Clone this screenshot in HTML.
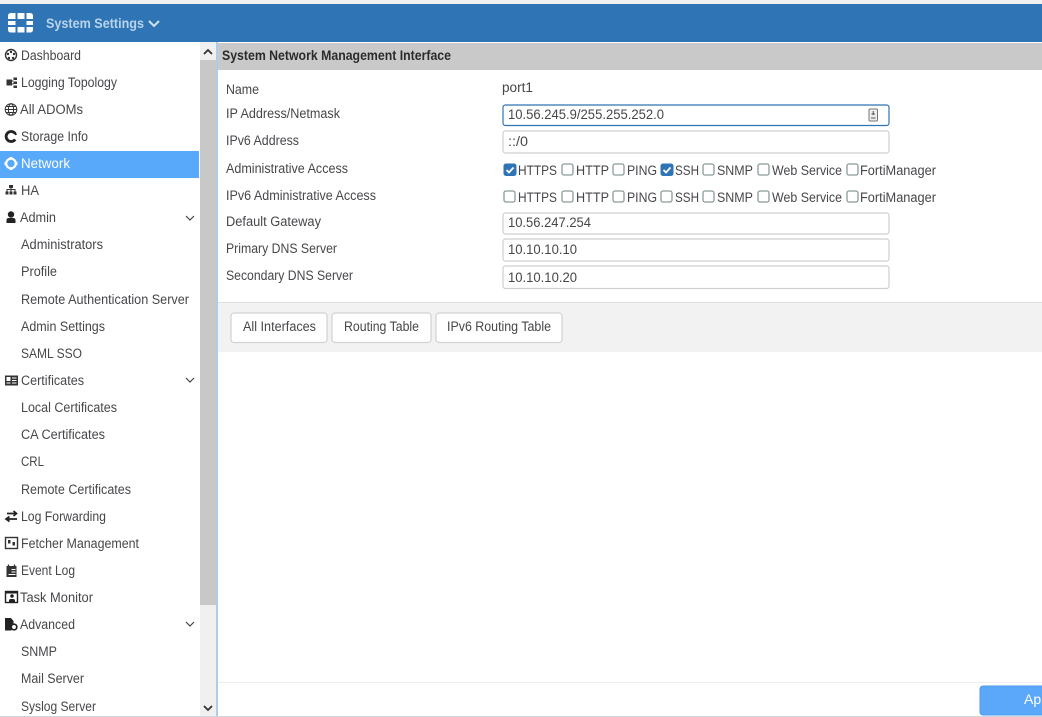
<!DOCTYPE html>
<html><head><meta charset="utf-8"><style>
html,body{margin:0;padding:0;background:#fff;width:1042px;height:717px;overflow:hidden}
svg{display:block;filter:blur(0.35px)}
text{font-family:"Liberation Sans",sans-serif;font-size:13.5px;fill:#47474b}
</style></head><body>
<svg width="1042" height="717" viewBox="0 0 1042 717" xmlns="http://www.w3.org/2000/svg">
<rect width="1042" height="717" fill="#fff"/>
<rect width="1042" height="4" fill="#f0f0f0"/>
<rect y="4" width="1042" height="38" fill="#2f75b5"/>
<!-- logo -->
<g fill="#fff">
<path d="M8 16 Q8 13 11 13 H15.500 V19 H8Z"/><rect x="17.500" y="13" width="7" height="6"/><path d="M26.500 13 H30 Q33 13 33 16 V19 H26.500Z"/>
<rect x="8" y="21" width="7.500" height="4"/><rect x="26.500" y="21" width="6.500" height="4"/>
<path d="M8 27 H15.500 V32.500 H11 Q8 32.500 8 29.500Z"/><rect x="17.500" y="27" width="7" height="5.500"/><path d="M26.500 27 H33 V29.500 Q33 32.500 30 32.500 H26.500Z"/>
</g>
<text x="46" y="28" textLength="98" lengthAdjust="spacingAndGlyphs" style="font-weight:bold;fill:#b9d4ea">System Settings</text>
<path d="M149 21 L154 26 L159 21" fill="none" stroke="#cfe2f1" stroke-width="2"/>

<!-- sidebar -->
<rect x="0" y="151" width="199" height="27" fill="#59a9fb"/>
<rect x="200" y="42" width="16" height="674" fill="#f0f0f0"/>
<rect x="200" y="60" width="16" height="545" fill="#c8c8c8"/>
<path d="M204 54 L208 50 L212 54" fill="none" stroke="#333" stroke-width="1.800"/>
<path d="M204 706 L208 710 L212 706" fill="none" stroke="#333" stroke-width="1.800"/>
<rect x="216.500" y="42" width="1" height="674" fill="#5b9bd0"/>

<text x="21" y="60" textLength="60" lengthAdjust="spacingAndGlyphs">Dashboard</text>
<text x="21" y="87" textLength="96" lengthAdjust="spacingAndGlyphs">Logging Topology</text>
<text x="20" y="114" textLength="63" lengthAdjust="spacingAndGlyphs">All ADOMs</text>
<text x="21" y="141" textLength="67" lengthAdjust="spacingAndGlyphs">Storage Info</text>
<text x="21" y="168" textLength="49" lengthAdjust="spacingAndGlyphs" style="fill:#fff">Network</text>
<text x="21" y="195" textLength="18" lengthAdjust="spacingAndGlyphs">HA</text>
<text x="20" y="222" textLength="36" lengthAdjust="spacingAndGlyphs">Admin</text>
<text x="21" y="249" textLength="82" lengthAdjust="spacingAndGlyphs">Administrators</text>
<text x="21" y="276" textLength="36" lengthAdjust="spacingAndGlyphs">Profile</text>
<text x="21" y="304" textLength="168" lengthAdjust="spacingAndGlyphs">Remote Authentication Server</text>
<text x="21" y="331" textLength="84" lengthAdjust="spacingAndGlyphs">Admin Settings</text>
<text x="21" y="358" textLength="61" lengthAdjust="spacingAndGlyphs">SAML SSO</text>
<text x="21" y="385" textLength="63" lengthAdjust="spacingAndGlyphs">Certificates</text>
<text x="21" y="412" textLength="96" lengthAdjust="spacingAndGlyphs">Local Certificates</text>
<text x="21" y="439" textLength="84" lengthAdjust="spacingAndGlyphs">CA Certificates</text>
<text x="21" y="466" textLength="23" lengthAdjust="spacingAndGlyphs">CRL</text>
<text x="21" y="494" textLength="110" lengthAdjust="spacingAndGlyphs">Remote Certificates</text>
<text x="21" y="521" textLength="85" lengthAdjust="spacingAndGlyphs">Log Forwarding</text>
<text x="21" y="548" textLength="118" lengthAdjust="spacingAndGlyphs">Fetcher Management</text>
<text x="21" y="575" textLength="54" lengthAdjust="spacingAndGlyphs">Event Log</text>
<text x="20" y="602" textLength="73" lengthAdjust="spacingAndGlyphs">Task Monitor</text>
<text x="20" y="629" textLength="55" lengthAdjust="spacingAndGlyphs">Advanced</text>
<text x="21" y="656" textLength="36" lengthAdjust="spacingAndGlyphs">SNMP</text>
<text x="21" y="683" textLength="63" lengthAdjust="spacingAndGlyphs">Mail Server</text>
<text x="21" y="711" textLength="75" lengthAdjust="spacingAndGlyphs">Syslog Server</text>

<!-- chevrons -->
<g fill="none" stroke="#444" stroke-width="1.200">
<path d="M186 216 L190 220 L194 216"/><path d="M186 378 L190 382 L194 378"/><path d="M186 622 L190 626 L194 622"/>
</g>

<!-- sidebar icons -->
<circle cx="11" cy="55" r="5.500" fill="none" stroke="#333" stroke-width="1.400"/>
<g fill="#333"><circle cx="11" cy="52" r="1.200"/><circle cx="8" cy="54" r="1.200"/><circle cx="14" cy="54" r="1.200"/><circle cx="9" cy="58" r="1.200"/><circle cx="13" cy="58" r="1.200"/></g>
<g fill="#333"><rect x="6.500" y="79.500" width="5.500" height="6"/><rect x="13.500" y="77.500" width="3.500" height="2.500"/><rect x="13.500" y="81.500" width="3.500" height="2.500"/><rect x="13.500" y="85.500" width="3.500" height="2.500"/></g>
<path d="M12 81H13.500M12 84H13.500" stroke="#333"/>
<g fill="none" stroke="#333" stroke-width="1"><circle cx="11" cy="109.500" r="5.800"/><ellipse cx="11" cy="109.500" rx="2.600" ry="5.800"/><path d="M5 109.500H17M6 106.500H16M6 112.500H16"/></g>
<path d="M15.200 133.600 A5 5 0 1 0 15.200 139.400" fill="none" stroke="#222" stroke-width="2.800"/>
<path d="M12.500 131.500 A5 5 0 0 1 16 135" fill="none" stroke="#222" stroke-width="2"/>
<circle cx="11" cy="163.500" r="4.800" fill="none" stroke="#fff" stroke-width="2.200"/>
<g fill="#fff"><rect x="9.500" y="157" width="3" height="2"/><rect x="9.500" y="168" width="3" height="2"/><rect x="4.500" y="162" width="2" height="3"/><rect x="15.500" y="162" width="2" height="3"/></g>
<g fill="#333"><rect x="9" y="185" width="4" height="3"/><rect x="5.500" y="191.500" width="3" height="3"/><rect x="9.500" y="191.500" width="3" height="3"/><rect x="13.500" y="191.500" width="3" height="3"/></g>
<path d="M6.500 189.500H15.500M7 189.500V192M11 188V192M15 189.500V192" stroke="#333" fill="none"/>
<circle cx="11" cy="214.500" r="3.200" fill="#222"/><path d="M6.500 223 V220 Q6.500 218 9 218 H13 Q15.500 218 15.500 220 V223Z" fill="#222"/>
<rect x="5" y="375.500" width="13" height="10" fill="#333"/><rect x="6.500" y="377" width="4" height="4" fill="#fff"/><path d="M12 378H16.500M12 380.500H16.500M12 383H16.500M6.500 383H10.500" stroke="#fff"/>
<path d="M7 513.500H15.500M13.500 511 L16.500 513.500 L13.500 516" fill="none" stroke="#222" stroke-width="1.700"/>
<path d="M17 519H7.500M9.500 516.500 L6 519 L9.500 521.500" fill="none" stroke="#222" stroke-width="1.700"/>
<rect x="5.500" y="537.500" width="12" height="11" fill="#fff" stroke="#333" stroke-width="1.400"/><rect x="8" y="540" width="2.500" height="3.500" fill="#333"/><rect x="12.500" y="542" width="2.500" height="3.500" fill="#333"/>
<rect x="6.500" y="566" width="10" height="11" fill="#333"/><path d="M8.500 564.500V568M14.500 564.500V568" stroke="#333" stroke-width="1.400"/><path d="M11.500 569.500H15.500M11.500 572H15.500M8.500 574.500H15.500" stroke="#fff"/>
<rect x="5.500" y="591.500" width="12" height="11" fill="#fff" stroke="#222" stroke-width="1.400"/><rect x="5" y="591" width="13" height="2.500" fill="#222"/><circle cx="12" cy="596" r="1.800" fill="#222"/><path d="M9 603V600.500Q9 599 11 599H13Q15 599 15 600.500V603Z" fill="#222"/>
<path d="M5 618H11L13.500 621V624H11.500V630.500H5Z" fill="#222"/><circle cx="14" cy="627" r="2.800" fill="#fff" stroke="#222" stroke-width="1.700"/>

<!-- main -->
<rect x="218" y="43" width="824" height="27" fill="#c9c9c9"/>
<text x="222" y="60" textLength="229" lengthAdjust="spacingAndGlyphs" style="font-weight:bold;fill:#2b2b2b">System Network Management Interface</text>
<text x="226" y="94" textLength="33" lengthAdjust="spacingAndGlyphs">Name</text>
<text x="502" y="92" textLength="31" lengthAdjust="spacingAndGlyphs">port1</text>
<text x="226" y="118" textLength="114" lengthAdjust="spacingAndGlyphs">IP Address/Netmask</text>
<text x="226" y="145" textLength="73" lengthAdjust="spacingAndGlyphs">IPv6 Address</text>
<text x="226" y="173" textLength="122" lengthAdjust="spacingAndGlyphs">Administrative Access</text>
<text x="226" y="200" textLength="150" lengthAdjust="spacingAndGlyphs">IPv6 Administrative Access</text>
<text x="226" y="226" textLength="95" lengthAdjust="spacingAndGlyphs">Default Gateway</text>
<text x="226" y="253" textLength="111" lengthAdjust="spacingAndGlyphs">Primary DNS Server</text>
<text x="226" y="280" textLength="127" lengthAdjust="spacingAndGlyphs">Secondary DNS Server</text>

<rect x="503" y="105" width="386" height="20.500" rx="2.500" fill="#fff" stroke="#2f75b5" stroke-width="1.200"/>
<rect x="503" y="131" width="386" height="22" rx="2.500" fill="#fff" stroke="#cfcfcf" stroke-width="1.200"/>
<rect x="503" y="213" width="386" height="21" rx="2.500" fill="#fff" stroke="#cfcfcf" stroke-width="1.200"/>
<rect x="503" y="239" width="386" height="22" rx="2.500" fill="#fff" stroke="#cfcfcf" stroke-width="1.200"/>
<rect x="503" y="266" width="386" height="22.500" rx="2.500" fill="#fff" stroke="#cfcfcf" stroke-width="1.200"/>
<text x="508" y="119" textLength="156" lengthAdjust="spacingAndGlyphs">10.56.245.9/255.255.252.0</text>
<text x="508" y="146" textLength="20" lengthAdjust="spacingAndGlyphs">::/0</text>
<text x="508" y="227" textLength="83" lengthAdjust="spacingAndGlyphs">10.56.247.254</text>
<text x="508" y="254" textLength="69" lengthAdjust="spacingAndGlyphs">10.10.10.10</text>
<text x="508" y="282" textLength="69" lengthAdjust="spacingAndGlyphs">10.10.10.20</text>
<rect x="869" y="109" width="8.500" height="12" rx="1" fill="#eee" stroke="#777" stroke-width="1"/>
<path d="M873.200 111V115M871.500 114H875M871 118H875.500" stroke="#555" fill="none"/>

<!-- checkboxes row 1 -->
<rect x="504" y="164" width="12" height="11.500" rx="2" fill="#2f75b5" stroke="#2f75b5"/>
<path d="M506.500 170 L509 172.500 L513.500 167.500" fill="none" stroke="#fff" stroke-width="1.800"/>
<g fill="#fff" stroke="#8a9a9a" stroke-width="1.300">
<rect x="562" y="164" width="11" height="11" rx="2"/><rect x="613" y="164" width="11" height="11" rx="2"/>
<rect x="703" y="164" width="11" height="11" rx="2"/><rect x="758" y="164" width="11" height="11" rx="2"/><rect x="847" y="164" width="11" height="11" rx="2"/>
</g>
<rect x="661" y="164" width="12" height="11.500" rx="2" fill="#2f75b5" stroke="#2f75b5"/>
<path d="M663.500 170 L666 172.500 L670.500 167.500" fill="none" stroke="#fff" stroke-width="1.800"/>
<text x="518" y="175" textLength="39" lengthAdjust="spacingAndGlyphs">HTTPS</text>
<text x="576" y="175" textLength="33" lengthAdjust="spacingAndGlyphs">HTTP</text>
<text x="627" y="175" textLength="30" lengthAdjust="spacingAndGlyphs">PING</text>
<text x="675" y="175" textLength="24" lengthAdjust="spacingAndGlyphs">SSH</text>
<text x="717" y="175" textLength="36" lengthAdjust="spacingAndGlyphs">SNMP</text>
<text x="772" y="175" textLength="70" lengthAdjust="spacingAndGlyphs">Web Service</text>
<text x="860" y="175" textLength="76" lengthAdjust="spacingAndGlyphs">FortiManager</text>

<!-- checkboxes row 2 -->
<g fill="#fff" stroke="#8a9a9a" stroke-width="1.300">
<rect x="504" y="191" width="11" height="11" rx="2"/><rect x="562" y="191" width="11" height="11" rx="2"/><rect x="613" y="191" width="11" height="11" rx="2"/>
<rect x="661" y="191" width="11" height="11" rx="2"/><rect x="703" y="191" width="11" height="11" rx="2"/><rect x="758" y="191" width="11" height="11" rx="2"/><rect x="847" y="191" width="11" height="11" rx="2"/>
</g>
<text x="518" y="202" textLength="39" lengthAdjust="spacingAndGlyphs">HTTPS</text>
<text x="576" y="202" textLength="33" lengthAdjust="spacingAndGlyphs">HTTP</text>
<text x="627" y="202" textLength="30" lengthAdjust="spacingAndGlyphs">PING</text>
<text x="675" y="202" textLength="24" lengthAdjust="spacingAndGlyphs">SSH</text>
<text x="717" y="202" textLength="36" lengthAdjust="spacingAndGlyphs">SNMP</text>
<text x="772" y="202" textLength="70" lengthAdjust="spacingAndGlyphs">Web Service</text>
<text x="860" y="202" textLength="76" lengthAdjust="spacingAndGlyphs">FortiManager</text>

<!-- button bar -->
<rect x="218" y="302" width="824" height="50" fill="#f2f2f2"/>
<rect x="218" y="302" width="824" height="1" fill="#dedede"/>
<g fill="#fff" stroke="#d2d2d2" stroke-width="1.200">
<rect x="231" y="313" width="96" height="29.500" rx="3"/><rect x="332" y="313" width="99" height="29.500" rx="3"/><rect x="436" y="313" width="126" height="29.500" rx="3"/>
</g>
<text x="243" y="331" textLength="73" lengthAdjust="spacingAndGlyphs">All Interfaces</text>
<text x="344" y="331" textLength="75" lengthAdjust="spacingAndGlyphs">Routing Table</text>
<text x="447" y="331" textLength="104" lengthAdjust="spacingAndGlyphs">IPv6 Routing Table</text>

<!-- footer -->
<rect x="218" y="682" width="824" height="1" fill="#eeeeee"/>
<rect x="0" y="716" width="1042" height="1" fill="#cfd6dc"/>
<rect x="980" y="686" width="70" height="29" rx="3" fill="#5ba8fb" stroke="#4f9bec"/>
<text x="1024" y="704" style="fill:#fff;font-size:14px">App</text>
</svg>
</body></html>
